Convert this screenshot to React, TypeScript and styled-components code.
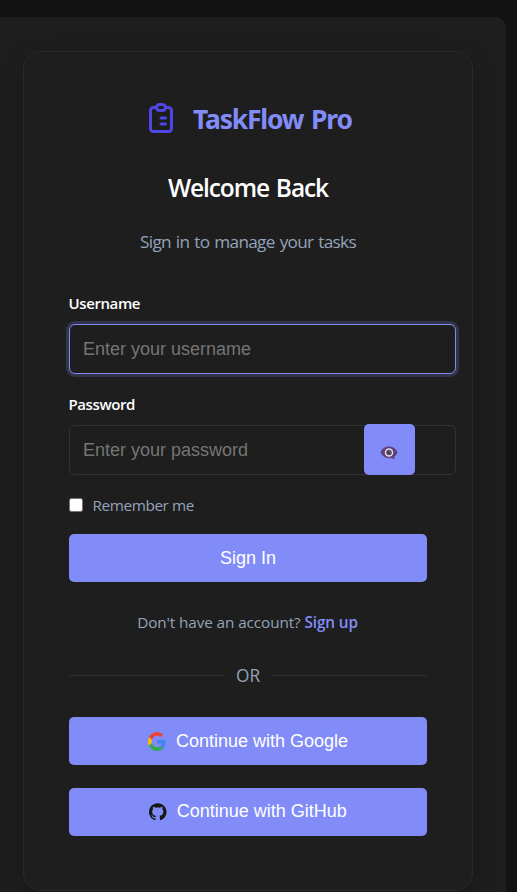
import React from 'react';
import styled, { createGlobalStyle } from 'styled-components';

const ui = '"Open Sans", "Noto Sans", sans-serif';
const control = '"Liberation Sans", Arial, sans-serif';
const accent = '#818cf8';
const muted = '#94a3b8';

const GlobalStyle = createGlobalStyle`
  * { box-sizing: border-box; }
  html, body { margin: 0; background: #121212; }
  body { height: 892px; overflow: hidden; }
`;

const Page = styled.div`
  height: 892px;
  padding: 17px 11px 0 0;
  overflow: hidden;
  background: #121212;
  font-family: ${ui};
`;

const Panel = styled.main`
  height: 920px;
  padding: 34px 33px 0 23px;
  border-radius: 0 11px 0 0;
  background: #1e1e1e;
`;

const Card = styled.section`
  height: 840px;
  padding: 48px 45px 0;
  border: 1px solid #2a2a2a;
  border-radius: 18px;
  background: #1e1e1e;
  box-shadow: 0 9px 27px rgba(0, 0, 0, 0.2);
`;

const Brand = styled.div`
  display: flex;
  align-items: center;
  gap: 14px;
  height: 36px;
  padding-left: 74px;
`;

const BrandName = styled.h1`
  margin: 2px 0 0;
  color: ${accent};
  font: 700 26.5px/36px "Noto Sans", sans-serif;
  letter-spacing: -1.2px;
  word-spacing: 2px;
  white-space: nowrap;
`;

const Heading = styled.h2`
  margin: 36px 0 0;
  color: #fff;
  font: 600 24.5px/32px ${ui};
  letter-spacing: -1.1px;
  word-spacing: 1.6px;
  text-align: center;
`;

const Subtitle = styled.p`
  margin: 25px 0 0;
  color: ${muted};
  font-size: 17.2px;
  line-height: 25px;
  letter-spacing: -0.7px;
  word-spacing: 1.2px;
  text-align: center;
`;

const Form = styled.form`
  margin-top: 39px;
`;

const Label = styled.label`
  display: block;
  margin: 0 0 11px -0.5px;
  color: #fff;
  font-size: 15px;
  font-weight: 650;
  line-height: 20px;
  letter-spacing: -0.4px;
`;

const Field = styled.div`
  position: relative;
  margin-bottom: 20px;
`;

const Input = styled.input<{ $active?: boolean }>`
  display: block;
  width: 387px;
  height: 50px;
  padding: 0 13px;
  border: 1px solid ${(p) => (p.$active ? accent : '#333')};
  border-radius: 6px;
  outline: none;
  background: #1e1e1e;
  box-shadow: ${(p) => (p.$active ? '0 0 0 3px rgba(129, 140, 248, 0.2)' : 'none')};
  color: #fff;
  font: 18px ${control};

  &::placeholder { color: #757575; opacity: 1; }
`;

const RevealButton = styled.button`
  position: absolute;
  top: -1px;
  right: 12px;
  display: flex;
  align-items: center;
  justify-content: center;
  width: 51px;
  height: 51px;
  padding: 6px 1px 0 0;
  border: 0;
  border-radius: 5px;
  background: ${accent};
`;

const Remember = styled.label`
  display: flex;
  align-items: center;
  gap: 9.5px;
  height: 20px;
  color: ${muted};
  font-size: 15.3px;
  line-height: 20px;
  letter-spacing: -0.4px;
`;

const Checkbox = styled.input`
  appearance: none;
  width: 14px;
  height: 14px;
  margin: 0;
  border: 1px solid #767676;
  border-radius: 2.5px;
  background: #fff;
`;

const Button = styled.button<{ $top: number; $lift?: number }>`
  display: flex;
  align-items: center;
  justify-content: center;
  gap: 10px;
  width: 100%;
  height: 48px;
  margin: ${(p) => p.$top}px 0 0;
  padding: 0 0 ${(p) => p.$lift ?? 0}px;
  border: 0;
  border-radius: 5px;
  background: ${accent};
  color: #fff;
  font: 18px/20px ${control};
`;

const SignUp = styled.p`
  margin: 30px 1px 0 0;
  color: ${muted};
  font-size: 15.3px;
  line-height: 20px;
  letter-spacing: -0.1px;
  text-align: center;
`;

const SignUpLink = styled.a`
  color: ${accent};
  font-weight: 650;
`;

const Divider = styled.div`
  display: flex;
  align-items: center;
  gap: 11px;
  height: 20px;
  margin-top: 33px;
  color: ${muted};
  font-size: 17.3px;

  &::before, &::after {
    content: '';
    flex: 1;
    height: 1px;
    background: #333;
  }
`;

const DividerText = styled.span`
  padding-top: 2px;
  line-height: 20px;
`;

const ClipboardIcon = () => (
  <svg width="36" height="36" viewBox="0 0 24 24" fill="none" stroke="#4f46e5" strokeWidth="2" strokeLinecap="round" strokeLinejoin="round">
    <path d="M9 5H7a2 2 0 0 0-2 2v12a2 2 0 0 0 2 2h10a2 2 0 0 0 2-2V7a2 2 0 0 0-2-2h-2M9 5a2 2 0 0 0 2 2h2a2 2 0 0 0 2-2M9 5a2 2 0 0 1 2-2h2a2 2 0 0 1 2 2m-3 7h3m-3 4h3" />
  </svg>
);

const EyeBubbleIcon = () => (
  <svg width="18" height="14" viewBox="0 0 18 14">
    <path d="M.5 6.3C2.2 2.4 5.2.4 9 .4s6.800 2 8.500 5.900c-.6 1.700-1.700 3.200-3.200 4.300l.3 2.900-3-1.600c-.8.2-1.700.3-2.600.3C5.200 12.200 2.200 10.200.5 6.300Z" fill="#5f3f7c" />
    <circle cx="9" cy="6.400" r="3.500" fill="#51405f" stroke="#e3dfe6" strokeWidth="1.500" />
    <circle cx="10" cy="5.400" r=".7" fill="#8f8299" />
  </svg>
);

const GoogleIcon = () => (
  <svg width="18" height="19" viewBox="0 0 48 48" preserveAspectRatio="none">
    <path fill="#EA4335" d="M24 9.500c3.540 0 6.710 1.220 9.210 3.600l6.850-6.850C35.900 2.380 30.470 0 24 0 14.620 0 6.510 5.380 2.560 13.220l7.980 6.190C12.430 13.720 17.740 9.500 24 9.500z" />
    <path fill="#4285F4" d="M46.980 24.550c0-1.570-.15-3.090-.38-4.550H24v9.020h12.940c-.58 2.960-2.260 5.480-4.780 7.180l7.730 6c4.510-4.180 7.090-10.360 7.090-17.650z" />
    <path fill="#FBBC05" d="M10.530 28.590A14.500 14.500 0 0 1 9.770 24c0-1.600.27-3.140.76-4.590l-7.980-6.190A23.900 23.900 0 0 0 0 24c0 3.880.92 7.540 2.560 10.780l7.970-6.190z" />
    <path fill="#34A853" d="M24 48c6.480 0 11.930-2.130 15.890-5.810l-7.730-6c-2.150 1.450-4.920 2.300-8.160 2.300-6.260 0-11.570-4.220-13.470-9.910l-7.980 6.190C6.510 42.620 14.620 48 24 48z" />
  </svg>
);

const GitHubMark = styled.svg`
  margin-top: 2px;
`;

const GitHubIcon = () => (
  <GitHubMark width="17.500" height="17.500" viewBox="0 0 24 24" fill="#181717">
    <path d="M12 .297c-6.630 0-12 5.373-12 12 0 5.303 3.438 9.800 8.205 11.385.6.113.82-.258.82-.577 0-.285-.01-1.040-.015-2.040-3.338.724-4.042-1.610-4.042-1.610C4.422 18.070 3.633 17.700 3.633 17.700c-1.087-.744.084-.729.084-.729 1.205.084 1.838 1.236 1.838 1.236 1.070 1.835 2.809 1.305 3.495.998.108-.776.417-1.305.76-1.605-2.665-.3-5.466-1.332-5.466-5.930 0-1.310.465-2.380 1.235-3.220-.135-.303-.54-1.523.105-3.176 0 0 1.005-.322 3.300 1.230.96-.267 1.980-.399 3-.405 1.020.006 2.040.138 3 .405 2.280-1.552 3.285-1.230 3.285-1.230.645 1.653.24 2.873.12 3.176.765.840 1.230 1.910 1.230 3.220 0 4.610-2.805 5.625-5.475 5.920.42.360.81 1.096.81 2.220 0 1.606-.015 2.896-.015 3.286 0 .315.21.690.825.570C20.565 22.092 24 17.592 24 12.297c0-6.627-5.373-12-12-12" />
  </GitHubMark>
);

export default function App() {
  return (
    <>
      <GlobalStyle />
      <Page>
        <Panel>
          <Card>
            <Brand>
              <ClipboardIcon />
              <BrandName>TaskFlow Pro</BrandName>
            </Brand>
            <Heading>Welcome Back</Heading>
            <Subtitle>Sign in to manage your tasks</Subtitle>
            <Form onSubmit={(e) => e.preventDefault()}>
              <Label htmlFor="username">Username</Label>
              <Field>
                <Input id="username" placeholder="Enter your username" $active />
              </Field>
              <Label htmlFor="password">Password</Label>
              <Field>
                <Input id="password" type="password" placeholder="Enter your password" />
                <RevealButton type="button" aria-label="Show password">
                  <EyeBubbleIcon />
                </RevealButton>
              </Field>
              <Remember>
                <Checkbox type="checkbox" />
                Remember me
              </Remember>
              <Button type="submit" $top={19}>Sign In</Button>
            </Form>
            <SignUp>
              Don't have an account? <SignUpLink>Sign up</SignUpLink>
            </SignUp>
            <Divider>
              <DividerText>OR</DividerText>
            </Divider>
            <Button type="button" $top={32}>
              <GoogleIcon />
              Continue with Google
            </Button>
            <Button type="button" $top={23} $lift={2}>
              <GitHubIcon />
              Continue with GitHub
            </Button>
          </Card>
        </Panel>
      </Page>
    </>
  );
}
